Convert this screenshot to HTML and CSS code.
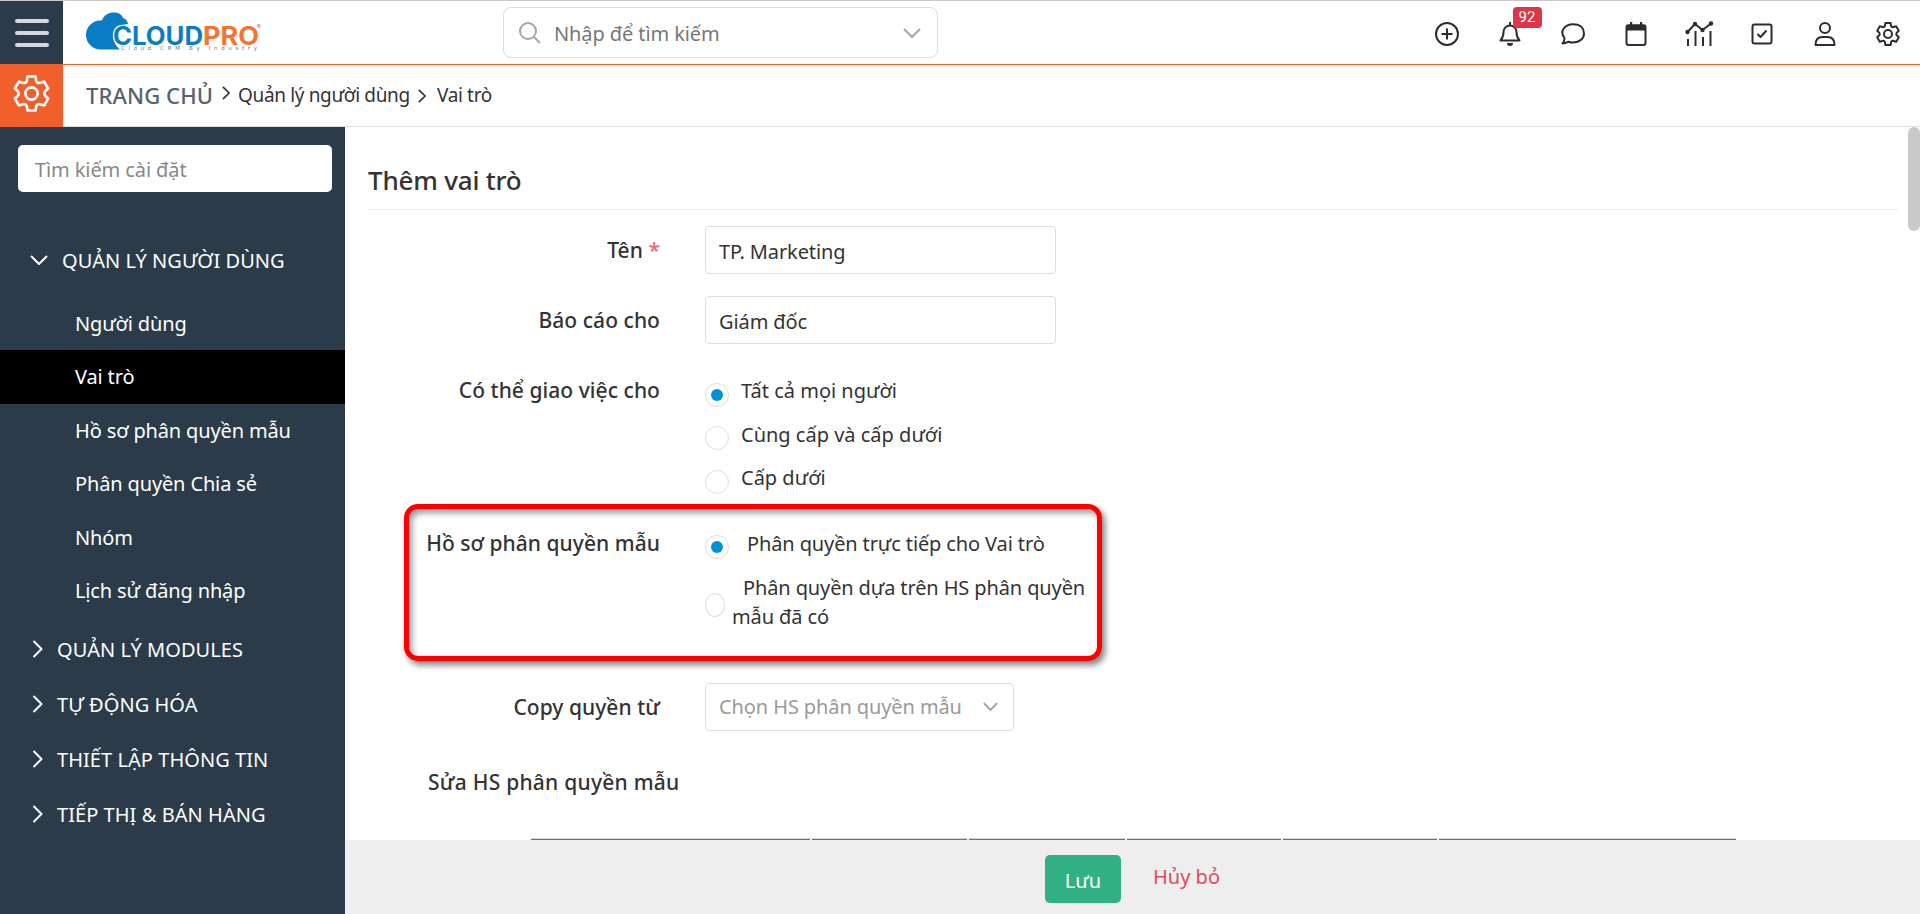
FILE: index.html
```html
<!DOCTYPE html>
<html lang="vi">
<head>
  <meta charset="UTF-8">
  <title>Thêm vai trò</title>
  <link rel="stylesheet" href="styles.css">
</head>
<body>
  <!-- Shared icon shapes -->
  <svg class="defs" xmlns="http://www.w3.org/2000/svg">
    <symbol id="gear" viewBox="0 0 24 24">
      <path d="M9.4 1h5.2L15 3.600Q15.600 5.600 17.600 5L20.200 4.250 22.800 8.750 21 10.400Q19.600 12 21 13.600L22.800 15.250 20.200 19.750 17.600 19Q15.600 18.400 15 20.400L14.600 23H9.400L9 20.400Q8.400 18.400 6.400 19L3.800 19.750 1.200 15.250 3 13.600Q4.400 12 3 10.400L1.200 8.750 3.800 4.250 6.400 5Q8.400 5.600 9 3.600z"/>
      <circle cx="12" cy="12" r="4"/>
    </symbol>
    <symbol id="chevron-right" viewBox="0 0 10 18"><path d="M1 1l8 8-8 8"/></symbol>
    <symbol id="chevron-down" viewBox="0 0 18 10"><path d="M1 1l8 8 8-8"/></symbol>
  </svg>

  <header class="topbar">
    <div class="burger"><span></span><span></span><span></span></div>
    <svg class="logo" viewBox="0 0 176 40">
      <path d="M34 37.500H15A14.500 14.500 0 0 1 14 8.500h2C19-1 34-2 37 6q4 1 5 6C28 13 22 27 34 37.500z" fill="#0a7cc6"/>
      <text x="27" y="33" textLength="90" lengthAdjust="spacingAndGlyphs" class="logo-text cloud">CLOUD</text>
      <text x="117" y="33" textLength="56" lengthAdjust="spacingAndGlyphs" class="logo-text pro">PRO</text>
      <text x="35" y="38" textLength="136" class="logo-sub">Cloud CRM By Industry</text>
      <text x="170" y="16" class="logo-sub">®</text>
    </svg>
    <div class="search">
      <svg class="search-icon" viewBox="0 0 22 22"><circle cx="9" cy="9" r="8"/><path d="M15 15l6 6"/></svg>
      <span>Nhập để tìm kiếm</span>
      <svg class="search-arrow"><use href="#chevron-down"/></svg>
    </div>
    <nav class="tools">
      <div class="tool"><svg viewBox="0 0 26 26"><circle cx="13" cy="13" r="11"/><path d="M13 7.500v11M7.500 13h11"/></svg></div>
      <div class="tool">
        <svg viewBox="0 0 26 26"><path d="M3.500 19.500c2.500-3 3-5 3-8.500a6.500 6.500 0 0 1 13 0c0 3.500.5 5.500 3 8.500zM13 1v3"/><path class="solid" d="M10 22h6a3 3 0 0 1-6 0z"/></svg>
        <span class="badge">92</span>
      </div>
      <div class="tool"><svg viewBox="0 0 26 26"><path d="M4.500 17C-1 10 5 3.200 13 3.200s11 4.500 11 9.300S20 21.500 13 21.500q-2.500 0-4.500-.8Q5.500 22.500 2.500 22.500 4.500 20.500 4.500 17z"/></svg></div>
      <div class="tool"><svg viewBox="0 0 26 26"><rect x="3.500" y="4.200" width="19" height="19.800" rx="2"/><path class="solid" d="M3 4h20v5.500H3zM7 1h2.200v4H7zM17 1h2.200v4H17z"/></svg></div>
      <div class="tool"><svg class="chart" viewBox="0 0 28 26"><path d="M2.500 11 10 3l7.500 6L26 2.500M3 18v7M10.500 10v15M18 16v9M25.500 10v15"/><circle class="solid" cx="2.500" cy="11" r="2.200"/><circle class="solid" cx="10" cy="3" r="2.200"/><circle class="solid" cx="17.500" cy="9" r="2.200"/><circle class="solid" cx="26" cy="2.500" r="2.200"/></svg></div>
      <div class="tool"><svg viewBox="0 0 26 26"><rect x="3.500" y="3.500" width="19" height="19" rx="2"/><path d="M8.500 13l3 3 6-6.500"/></svg></div>
      <div class="tool"><svg viewBox="0 0 26 26"><circle cx="13" cy="7" r="5"/><path d="M3.500 24q0-8 7-8h5q7 0 7 8z"/></svg></div>
      <div class="tool"><svg class="settings"><use href="#gear"/></svg></div>
    </nav>
  </header>

  <div class="crumbs">
    <div class="module-icon"><svg><use href="#gear"/></svg></div>
    <span class="crumb-home">TRANG CHỦ</span>
    <svg class="crumb-sep first"><use href="#chevron-right"/></svg>
    <span class="crumb">Quản lý người dùng</span>
    <svg class="crumb-sep"><use href="#chevron-right"/></svg>
    <span class="crumb last">Vai trò</span>
  </div>

  <div class="page">
    <aside class="sidebar">
      <div class="side-search">Tìm kiếm cài đặt</div>
      <div class="group open"><svg><use href="#chevron-down"/></svg>QUẢN LÝ NGƯỜI DÙNG</div>
      <ul class="items">
        <li>Người dùng</li>
        <li class="active">Vai trò</li>
        <li>Hồ sơ phân quyền mẫu</li>
        <li>Phân quyền Chia sẻ</li>
        <li>Nhóm</li>
        <li>Lịch sử đăng nhập</li>
      </ul>
      <div class="group"><svg><use href="#chevron-right"/></svg>QUẢN LÝ MODULES</div>
      <div class="group"><svg><use href="#chevron-right"/></svg>TỰ ĐỘNG HÓA</div>
      <div class="group"><svg><use href="#chevron-right"/></svg>THIẾT LẬP THÔNG TIN</div>
      <div class="group"><svg><use href="#chevron-right"/></svg>TIẾP THỊ &amp; BÁN HÀNG</div>
    </aside>

    <main class="content">
      <div class="form">
        <h1>Thêm vai trò</h1>
        <div class="row">
          <label>Tên <span class="required">*</span></label>
          <div class="input">TP. Marketing</div>
        </div>
        <div class="row">
          <label>Báo cáo cho</label>
          <div class="input">Giám đốc</div>
        </div>
        <div class="row assign">
          <label>Có thể giao việc cho</label>
          <div class="options">
            <div class="option"><i class="radio checked"></i>Tất cả mọi người</div>
            <div class="option"><i class="radio"></i>Cùng cấp và cấp dưới</div>
            <div class="option"><i class="radio"></i>Cấp dưới</div>
          </div>
        </div>
        <div class="row profile">
          <label>Hồ sơ phân quyền mẫu</label>
          <div class="options">
            <div class="option direct"><i class="radio checked"></i>Phân quyền trực tiếp cho Vai trò</div>
            <div class="option wrapped"><i class="radio narrow"></i><span>Phân quyền dựa trên HS phân quyền<br>mẫu đã có</span></div>
          </div>
          <div class="highlight"></div>
        </div>
        <div class="row copy">
          <label>Copy quyền từ</label>
          <div class="input select">Chọn HS phân quyền mẫu<svg><use href="#chevron-down"/></svg></div>
        </div>
        <h2>Sửa HS phân quyền mẫu</h2>
        <div class="table-head"><span></span><span></span><span></span><span></span><span></span><span></span></div>
      </div>
      <div class="scrollbar"></div>
      <footer class="actions">
        <button class="save">Lưu</button>
        <a class="cancel">Hủy bỏ</a>
      </footer>
    </main>
  </div>
</body>
</html>
```
FILE: styles.css
```css
* {
  box-sizing: border-box;
}
body {
  margin: 0;
  height: 914px;
  overflow: hidden;
  background: #fff;
  color: #333;
  font-family: "Noto Sans", "Open Sans", sans-serif;
  font-size: 20px;
}
svg {
  fill: none;
  stroke: currentColor;
  stroke-width: 1.7;
  stroke-linejoin: round;
  flex: none;
  overflow: visible;
}
.defs {
  position: absolute;
  width: 0;
  height: 0;
}
.solid {
  fill: currentColor;
  stroke: none;
}

/* Top bar */
.topbar {
  display: flex;
  align-items: center;
  height: 65px;
  border-top: 1px solid #c8c8c8;
  border-bottom: 1px solid #f15f2a;
}
.burger {
  width: 63px;
  height: 63px;
  background: #2c3b49;
  display: flex;
  flex-direction: column;
  align-items: center;
  justify-content: center;
  gap: 8px;
}
.burger span {
  width: 34px;
  height: 4px;
  border-radius: 2px;
  background: #d5d8dc;
}
.logo {
  width: 176px;
  height: 40px;
  margin: -1px 0 0 23px;
  stroke: none;
}
.logo-text {
  font: 700 25px Inter, sans-serif;
}
.cloud {
  fill: #0a7cc6;
  stroke: #fff;
  stroke-width: 2.5px;
  paint-order: stroke;
}
.pro {
  fill: #f47432;
}
.logo-sub {
  font: 5.5px "DejaVu Sans", sans-serif;
  fill: #777;
}
.search {
  display: flex;
  align-items: center;
  width: 435px;
  height: 51px;
  margin: 0 0 0 241px;
  padding: 0 16px 0 15px;
  border: 1px solid #ddd;
  border-radius: 8px;
  color: #777;
}
.search span {
  flex: 1;
  margin-left: 13px;
  padding-top: 2px;
  letter-spacing: -0.1px;
}
.search svg {
  color: #a5a5a5;
  stroke-width: 2;
}
.search-icon {
  width: 22px;
  height: 22px;
}
.search-arrow {
  width: 18px;
  height: 10px;
}
.tools {
  display: flex;
  margin: 2px 0.5px 0 auto;
}
.tool {
  position: relative;
  width: 63px;
  height: 50px;
  display: flex;
  align-items: center;
  justify-content: center;
}
.tool svg {
  width: 26px;
  height: 26px;
  color: #2d2d2d;
  stroke-width: 2;
}
.tool .chart {
  width: 28px;
}
.tool .settings {
  width: 24px;
  height: 24px;
}
.badge {
  position: absolute;
  left: 34px;
  top: -2px;
  width: 29px;
  height: 21px;
  border-radius: 4px;
  background: #dc3648;
  color: #fff;
  font: 15px/20px Roboto, sans-serif;
  text-align: center;
}

/* Breadcrumb bar */
.crumbs {
  display: flex;
  align-items: center;
  height: 62px;
  border-bottom: 1px solid #ddd;
}
.module-icon {
  width: 63px;
  height: 63px;
  margin-bottom: -1px;
  padding-bottom: 5px;
  background: #f15f2a;
  color: #fff;
  display: flex;
  align-items: center;
  justify-content: center;
}
.module-icon svg {
  width: 37px;
  height: 37px;
}
.crumb-home {
  margin: -2px 0 0 23px;
  width: 136px;
  color: #56626f;
  font-size: 22px;
  font-weight: 500;
  letter-spacing: 0.1px;
}
.crumb-sep {
  width: 8px;
  height: 14px;
  stroke-width: 2.2;
}
.crumb-sep.first {
  margin-top: -6px;
}
.crumb {
  width: 180px;
  margin: -2px 0 0 8px;
  font-size: 19px;
  letter-spacing: -0.35px;
}
.crumb.last {
  margin-left: 11px;
}

/* Sidebar */
.page {
  display: flex;
  height: 787px;
}
.sidebar {
  width: 345px;
  background: #2c3b49;
  color: #fff;
}
.side-search {
  height: 47px;
  margin: 18px 13px 0 18px;
  padding-left: 17px;
  border-radius: 5px;
  background: #fff;
  color: #888;
  letter-spacing: -0.1px;
  line-height: 49px;
}
.group {
  display: flex;
  align-items: center;
  height: 55px;
  padding-left: 32px;
  gap: 14px;
  letter-spacing: 0.05px;
}
.group svg {
  width: 11px;
  height: 18px;
  stroke-width: 2;
}
.group.open {
  height: 73px;
  margin-top: 31.5px;
  padding-left: 30px;
}
.group.open svg {
  width: 18px;
  height: 10px;
}
.items {
  margin: 0 0 4px;
  padding: 0;
  list-style: none;
  letter-spacing: -0.14px;
}
.items li {
  height: 53.5px;
  padding-left: 75px;
  line-height: 54px;
}
.items .active {
  background: #000;
}

/* Form */
.content {
  position: relative;
  flex: 1;
  display: flex;
  flex-direction: column;
}
.form {
  height: 713px;
  padding: 0 22px 0 23px;
  overflow: hidden;
}
h1 {
  height: 83px;
  margin: 0 0 16px;
  border-bottom: 1px solid #eaeaea;
  font-size: 26px;
  font-weight: 500;
  letter-spacing: -0.2px;
  line-height: 106px;
}
.row {
  position: relative;
  display: flex;
  height: 48px;
  margin-bottom: 22px;
}
.row label {
  width: 292px;
  margin-right: 45px;
  text-align: right;
  font-size: 21px;
  font-weight: 500;
  letter-spacing: 0.05px;
  line-height: 48px;
}
.required {
  color: #e9657a;
}
.input {
  width: 351px;
  height: 48px;
  padding-left: 13px;
  border: 1px solid #ddd;
  border-radius: 4px;
  letter-spacing: -0.1px;
  line-height: 49px;
}
.assign,
.profile {
  height: auto;
}
.assign {
  margin-top: 25px;
}
.row.assign label,
.row.profile label {
  line-height: 43px;
}
.option {
  display: flex;
  height: 43.5px;
  line-height: 44px;
}
.radio {
  display: flex;
  flex: none;
  align-items: center;
  justify-content: center;
  width: 24px;
  height: 24px;
  margin: 13.5px 12px 0 0;
  border: 1px solid #ddd;
  border-radius: 50%;
}
.checked::after {
  content: "";
  width: 12px;
  height: 12px;
  border-radius: 50%;
  background: #0590d5;
}
.profile .option {
  letter-spacing: -0.12px;
}
.direct .radio {
  margin-right: 18px;
}
.option.wrapped {
  height: 58px;
  margin-top: 8px;
  line-height: 29px;
}
.wrapped span {
  text-indent: 11px;
  white-space: nowrap;
}
.radio.narrow {
  width: 20px;
  margin: 20px 7px 0 0;
}
/* Callout frame around the profile choice */
.highlight {
  position: absolute;
  left: 36px;
  top: -18px;
  width: 698px;
  height: 157px;
  border: 5px solid #fe0000;
  border-radius: 14px;
  box-shadow: 3px 4px 6px rgba(0, 0, 0, 0.5), inset 3px 4px 6px rgba(0, 0, 0, 0.4);
}
.copy {
  margin-top: 51.5px;
}
.select {
  display: flex;
  align-items: center;
  justify-content: space-between;
  width: 309px;
  padding-right: 15px;
  color: #999;
  line-height: 46px;
}
.select svg {
  width: 15px;
  height: 9px;
  stroke-width: 2;
}
h2 {
  height: 40px;
  margin: 31px 0 0 60px;
  font-size: 21px;
  font-weight: 500;
  letter-spacing: 0.25px;
  line-height: 40px;
}
.table-head {
  display: grid;
  grid-template-columns: 279px 155px 156px 154px 154px 297px;
  gap: 2px;
  width: 1205px;
  height: 20px;
  margin: 36px 0 0 163px;
  border-top: 1px solid #d8d8d8;
}
.table-head span {
  background: #0f8fc4;
}
.scrollbar {
  position: absolute;
  right: 0;
  top: 0;
  width: 12px;
  height: 104px;
  border-radius: 6px;
  background: #c9c9c9;
}

/* Footer buttons */
.actions {
  display: flex;
  align-items: flex-start;
  height: 74px;
  padding: 15px 0 0 700px;
  background: #eee;
}
.save {
  width: 76px;
  height: 48px;
  padding: 2px 0 0;
  border: 0;
  border-radius: 5px;
  background: #31b083;
  color: #fff;
  font: inherit;
}
.cancel {
  margin-left: 32px;
  color: #e04a62;
  line-height: 43px;
}
```
